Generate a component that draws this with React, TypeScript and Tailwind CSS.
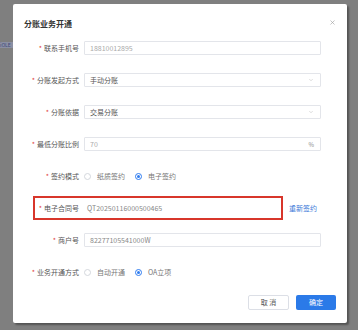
import { X, ChevronDown } from "lucide-react";

const font = { fontFamily: '"Noto Sans CJK SC", "Liberation Sans", sans-serif' };

const Label = ({ text, width = "w-[66px]" }: { text: string; width?: string }) => (
  <div className={`${width} shrink-0 flex justify-end items-center text-[7px] text-[#555]`}>
    <span className="text-[#e0403a] mr-[2px]">*</span>
    <span>{text}</span>
  </div>
);

const Radio = ({ checked, text }: { checked?: boolean; text: string }) => (
  <div className="flex items-center gap-[6px]">
    <span
      className={`w-[7px] h-[7px] rounded-full border flex items-center justify-center ${
        checked ? "border-[#2f7cf0]" : "border-[#d4d7dd]"
      }`}
    >
      {checked && <span className="w-[3px] h-[3px] rounded-full bg-[#2f7cf0]" />}
    </span>
    <span className="text-[7px] text-[#777]">{text}</span>
  </div>
);

const Row = ({ children }: { children: React.ReactNode }) => (
  <div className="h-[32px] flex items-center">{children}</div>
);

const Field = ({
  value,
  color = "text-[#aaa]",
  right,
}: {
  value: string;
  color?: string;
  right?: React.ReactNode;
}) => (
  <div className="ml-[5px] w-[237px] h-[14px] border border-[#e3e5ea] rounded-[1px] flex items-center justify-between pl-[5px] pr-[6px]">
    <span className={`text-[7px] ${color}`}>{value}</span>
    {right}
  </div>
);

export default function App() {
  return (
    <div className="w-[358px] h-[330px] bg-[#7f7f7f] flex pt-[4px]" style={font}>
      <div className="w-[13px] shrink-0 pt-[38px]">
        <div className="h-[6px] bg-[#8b8fa3] text-[5px] leading-[6px] text-[#3d4a7a] overflow-hidden">
          iOLE
        </div>
      </div>
      <div className="w-[334px] h-[319px] bg-white rounded-[2px] shadow-[2px_2px_2px_rgba(0,0,0,0.35)] flex flex-col">
        <div className="h-[28px] pt-[8px] pl-[11px] pr-[11px] flex items-center justify-between">
          <span className="text-[8px] font-bold text-[#333] pt-[3px]">分账业务开通</span>
          <X className="w-[7px] h-[7px] text-[#999]" strokeWidth={2} />
        </div>

        <Row>
          <Label text="联系手机号" />
          <Field value="18810012895" />
        </Row>
        <Row>
          <Label text="分账发起方式" />
          <Field
            value="手动分账"
            color="text-[#555]"
            right={<ChevronDown className="w-[6px] h-[6px] text-[#bbb]" strokeWidth={2} />}
          />
        </Row>
        <Row>
          <Label text="分账依据" />
          <Field
            value="交易分账"
            color="text-[#555]"
            right={<ChevronDown className="w-[6px] h-[6px] text-[#bbb]" strokeWidth={2} />}
          />
        </Row>
        <Row>
          <Label text="最低分账比例" />
          <Field value="70" right={<span className="text-[6px] text-[#888]">%</span>} />
        </Row>
        <Row>
          <Label text="签约模式" />
          <div className="ml-[5px] flex items-center gap-[10px]">
            <Radio text="纸质签约" />
            <Radio checked text="电子签约" />
          </div>
        </Row>
        <Row>
          <div className="ml-[20px] w-[250px] h-[24px] border-2 border-[#d8362b] flex items-center">
            <Label text="电子合同号" width="w-[44px]" />
            <span className="ml-[8px] text-[7px] text-[#888]">QT20250116000500465</span>
          </div>
          <span className="ml-[6px] text-[7px] text-[#3a78d8]">重新签约</span>
        </Row>
        <Row>
          <Label text="商户号" />
          <Field value="82277105541000W" color="text-[#888]" />
        </Row>
        <Row>
          <Label text="业务开通方式" />
          <div className="ml-[5px] flex items-center gap-[10px]">
            <Radio text="自动开通" />
            <Radio checked text="OA立项" />
          </div>
        </Row>

        <div className="mt-[7px] pr-[11px] flex justify-end gap-[7px]">
          <button className="w-[41px] h-[15px] border border-[#dcdfe6] rounded-[2px] bg-white text-[7px] text-[#555]">
            取 消
          </button>
          <button className="w-[40px] h-[15px] rounded-[2px] bg-[#2b7ae8] text-[7px] text-white">
            确定
          </button>
        </div>
      </div>
    </div>
  );
}
